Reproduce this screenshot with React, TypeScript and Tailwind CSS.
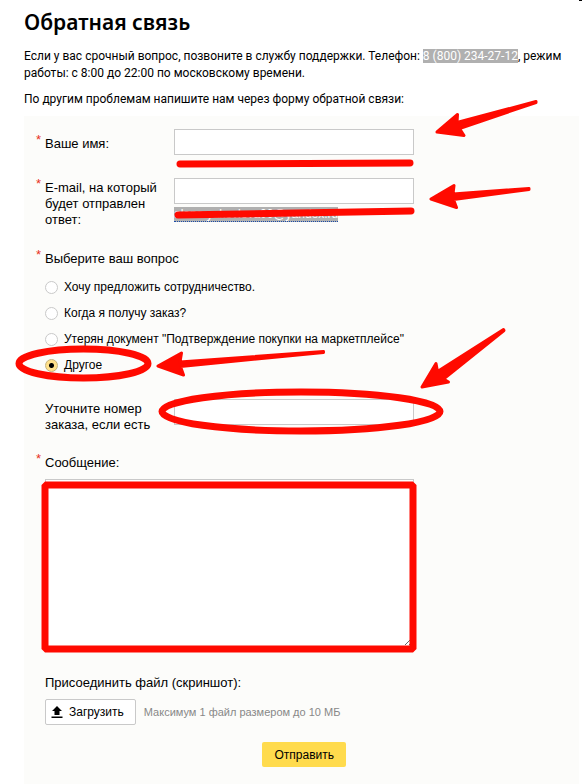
import type { ReactNode } from "react";

const QUESTIONS = [
  "Хочу предложить сотрудничество.",
  "Когда я получу заказ?",
  'Утерян документ "Подтверждение покупки на маркетплейсе"',
  "Другое",
];

const inputClass =
  "block w-full h-[26px] border border-[#c9c9c9] bg-white px-2 outline-none";

type TField = {
  id: string;
  label: string;
  required?: boolean;
  children: ReactNode;
};

function Star({ show }: { show?: boolean }) {
  return (
    <span className="w-[9px] shrink-0 -mt-1 text-[#e8301c]">
      {show ? "*" : ""}
    </span>
  );
}

function Field({ id, label, required, children }: TField) {
  return (
    <div className="flex items-start">
      <div className="w-[138px] min-h-[28px] shrink-0 flex items-center pt-[2px]">
        <div className="flex items-start">
          <Star show={required} />
          <label htmlFor={id} className="w-[120px]">
            {label}
          </label>
        </div>
      </div>
      <div className="w-[240px]">{children}</div>
    </div>
  );
}

function Marks() {
  return (
    <svg
      className="absolute top-0 left-0 pointer-events-none"
      width="582"
      height="784"
      viewBox="0 0 582 784"
      aria-hidden="true"
    >
      <rect x="579" y="0" width="3" height="1" fill="#000" />
      <g fill="none" stroke="#ff0a00" strokeLinecap="round">
        <path d="M180 164 L410 163" strokeWidth="7" />
        <path d="M178 215 L411 211" strokeWidth="7" />
        <ellipse cx="83.500" cy="363.500" rx="64.500" ry="14.500" strokeWidth="7" />
        <ellipse cx="301" cy="411.500" rx="139" ry="19.500" strokeWidth="7" />
        <rect x="45" y="485" width="368" height="164" strokeWidth="7" strokeLinejoin="bevel" />
      </g>
      <g fill="#ff0a00" stroke="#ff0a00" strokeWidth="3" strokeLinejoin="round">
        <path d="M437 132 L457.500 114.500 L457 122.500 L536 101.500 L536 102.500 L459.500 128.500 L464 135.500 Z" />
        <path d="M431 199 L454 185.500 L453 194 L529 188.500 L529 189.500 L453.500 199.500 L456.500 207.500 Z" />
        <path d="M158 366 L181.500 353 L180 362 L323.500 351.500 L323.500 352.500 L180.500 366.500 L183.500 375 Z" />
        <path d="M422 387 L436 363.500 L437.500 371.500 L503.500 329.500 L504 330.500 L443.500 379 L448.500 382 Z" />
      </g>
    </svg>
  );
}

export default function App() {
  return (
    <div className="relative min-h-screen flex flex-col bg-white text-black">
      <header className="pl-6 pr-4 pt-2 font-['Roboto',sans-serif] text-[12px] leading-[17px]">
        <h1 className="font-['Noto_Sans',sans-serif] text-[21px] leading-7 font-semibold">
          Обратная связь
        </h1>
        <p className="mt-3">
          Если у вас срочный вопрос, позвоните в службу поддержки. Телефон:{" "}
          <span className="bg-[#b0b0b0] text-white">8 (800) 234-27-12</span>, режим
          работы: с 8:00 до 22:00 по московскому времени.
        </p>
        <p className="mt-[9px]">
          По другим проблемам напишите нам через форму обратной связи:
        </p>
      </header>

      <form
        className="grow mt-2 ml-6 mr-[3px] pt-[13px] pb-4 pl-3 bg-[#fcfcfa] font-['Liberation_Sans',sans-serif] text-[13px] leading-4"
        onSubmit={(e) => e.preventDefault()}
      >
        <Field id="name" label="Ваше имя:" required>
          <input id="name" type="text" className={inputClass} />
        </Field>

        <div className="mt-[21px]">
          <Field id="email" label="E-mail, на который будет отправлен ответ:" required>
            <input id="email" type="email" className={inputClass} />
            <a
              href="#email"
              className="block w-fit mt-[3px] h-[15px] leading-[14px] text-[12px] bg-[#b0b0b0] text-white border-b border-dotted border-[#1a4ba8]"
            >
              alena.yakovleva00@yandex.ru
            </a>
          </Field>
        </div>

        <fieldset className="mt-[23px]">
          <legend className="flex">
            <Star show />
            Выберите ваш вопрос
          </legend>
          <div className="pl-[9px] pt-[7px]">
            {QUESTIONS.map((q) => (
              <label key={q} className="flex items-center gap-[6px] h-[26px] text-[12px]">
                <input
                  type="radio"
                  name="question"
                  defaultChecked={q === "Другое"}
                  className="appearance-none size-[13px] shrink-0 rounded-full border border-[#c9c9c9] bg-white checked:border-[#c4b27c] checked:bg-[radial-gradient(circle,#000_0_2px,#ffe08a_3px)]"
                />
                {q}
              </label>
            ))}
          </div>
        </fieldset>

        <div className="mt-[21px]">
          <Field id="order" label="Уточните номер заказа, если есть">
            <input id="order" type="text" className={inputClass} />
          </Field>
        </div>

        <div className="flex mt-[22px]">
          <Star show />
          <label htmlFor="message">Сообщение:</label>
        </div>
        <textarea
          id="message"
          className="block ml-[9px] mt-2 w-[369px] h-[168px] border border-[#c9c9c9] bg-white p-2 outline-none"
        />

        <div className="pl-[9px] mt-7">
          <p>Присоединить файл (скриншот):</p>
          <div className="flex items-center gap-2 mt-2">
            <button
              type="button"
              className="flex items-center gap-[6px] h-[26px] pl-[5px] pr-[11px] border border-[#c9c9c9] rounded-[2px] bg-white text-[12px]"
            >
              <svg width="12" height="12" viewBox="0 0 12 12" aria-hidden="true">
                <path d="M6 0 L11 5 H8.500 V9 H3.500 V5 H1 Z M0.500 10.500 H11.500 V12 H0.500 Z" />
              </svg>
              Загрузить
            </button>
            <span className="text-[11px] text-[#888]">
              Максимум 1 файл размером до 10 МБ
            </span>
          </div>
        </div>

        <div className="w-[310px] mt-[17px] flex justify-end">
          <button
            type="submit"
            className="h-[25px] px-3 rounded-[2px] bg-[#ffdb4d] text-[12px]"
          >
            Отправить
          </button>
        </div>
      </form>

      <Marks />
    </div>
  );
}
